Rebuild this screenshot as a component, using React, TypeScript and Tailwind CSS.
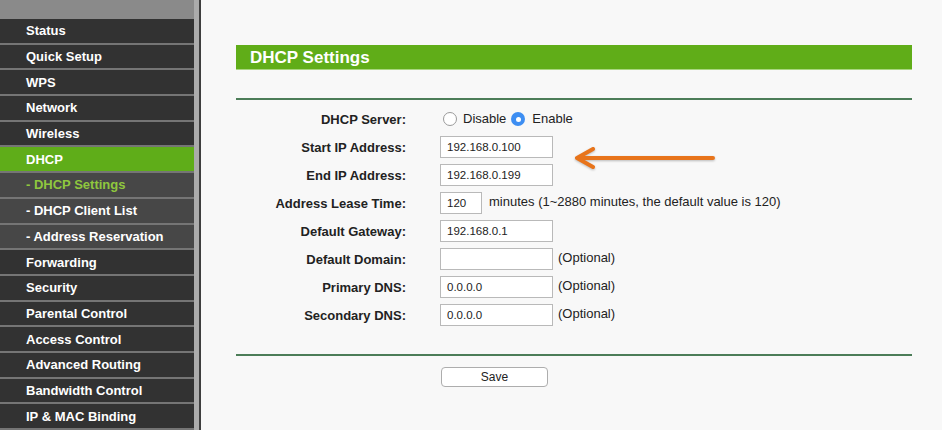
import React from "react";

type NavItem = { label: string; kind: "main" | "active" | "sub" | "subActive" };

const nav: NavItem[] = [
  { label: "Status", kind: "main" },
  { label: "Quick Setup", kind: "main" },
  { label: "WPS", kind: "main" },
  { label: "Network", kind: "main" },
  { label: "Wireless", kind: "main" },
  { label: "DHCP", kind: "active" },
  { label: "- DHCP Settings", kind: "subActive" },
  { label: "- DHCP Client List", kind: "sub" },
  { label: "- Address Reservation", kind: "sub" },
  { label: "Forwarding", kind: "main" },
  { label: "Security", kind: "main" },
  { label: "Parental Control", kind: "main" },
  { label: "Access Control", kind: "main" },
  { label: "Advanced Routing", kind: "main" },
  { label: "Bandwidth Control", kind: "main" },
  { label: "IP & MAC Binding", kind: "main" },
];

function NavRow({ item }: { item: NavItem }) {
  const bg =
    item.kind === "active"
      ? "bg-[#5fad19]"
      : item.kind === "main"
      ? "bg-[#323232]"
      : "bg-[#474747]";
  const color = item.kind === "subActive" ? "text-[#8fc73e]" : "text-white";
  return (
    <div
      className={`h-[25.7px] shrink-0 border-b-2 border-[#757575] ${bg} ${color} flex items-center pl-[26px] text-[13px] font-bold leading-none`}
    >
      {item.label}
    </div>
  );
}

function TextInput({ value, w = "w-[113px]" }: { value: string; w?: string }) {
  return (
    <div
      className={`${w} h-[22px] border border-[#b9b9b9] bg-white flex items-center pl-[6px] pt-[1px] text-[11.5px] text-[#222] leading-none`}
    >
      {value}
    </div>
  );
}

function Row({ label, children }: { label: string; children: React.ReactNode }) {
  return (
    <div className="h-[28px] flex items-center">
      <div className="w-[170px] text-right text-[13px] font-bold text-[#222] leading-none">
        {label}
      </div>
      <div className="ml-[34px] flex items-center">{children}</div>
    </div>
  );
}

function Optional() {
  return <span className="ml-[5px] text-[13px] text-[#222] leading-none -mt-[3px]">(Optional)</span>;
}

export default function App() {
  return (
    <div
      className="relative w-[942px] h-[430px] overflow-hidden flex bg-[#f8f8f8]"
      style={{ fontFamily: '"Liberation Sans", Arial, Helvetica, sans-serif' }}
    >
      {/* Sidebar */}
      <div className="w-[194px] shrink-0 flex flex-col">
        <div className="h-[19px] shrink-0 bg-[#8a8a8a]" />
        {nav.map((n) => (
          <NavRow key={n.label} item={n} />
        ))}
      </div>
      <div className="w-[5px] shrink-0 bg-[#ababab]" />
      <div className="w-[2px] shrink-0 bg-[#3e3e3e]" />

      {/* Content */}
      <div className="flex-1 pl-[35px] pr-[30px] pt-[45px]">
        <div className="h-[25px] bg-[#60ad18] border-b border-[#a9d67f] flex items-center pl-[14px] text-white font-bold text-[17px] leading-none">
          DHCP Settings
        </div>
        <div className="mt-[28px] border-t-2 border-[#4c7d58]" />
        <div className="pt-[5px]">
          <Row label="DHCP Server:">
            <div className="flex items-center text-[13px] text-[#222] leading-none">
              <span className="ml-[3px] w-[14px] h-[14px] rounded-full border border-[#9a9a9a] bg-white" />
              <span className="ml-[6px] -mt-[2px]">Disable</span>
              <span className="ml-[5px] w-[14px] h-[14px] rounded-full bg-[#3d8ef2] flex items-center justify-center">
                <span className="w-[5px] h-[5px] rounded-full bg-white" />
              </span>
              <span className="ml-[7px] -mt-[2px]">Enable</span>
            </div>
          </Row>
          <Row label="Start IP Address:">
            <TextInput value="192.168.0.100" />
          </Row>
          <Row label="End IP Address:">
            <TextInput value="192.168.0.199" />
          </Row>
          <Row label="Address Lease Time:">
            <TextInput value="120" w="w-[42px]" />
            <span className="ml-[7px] text-[13px] text-[#222] leading-none -mt-[3px]">
              minutes (1~2880 minutes, the default value is 120)
            </span>
          </Row>
          <Row label="Default Gateway:">
            <TextInput value="192.168.0.1" />
          </Row>
          <Row label="Default Domain:">
            <TextInput value="" />
            <Optional />
          </Row>
          <Row label="Primary DNS:">
            <TextInput value="0.0.0.0" />
            <Optional />
          </Row>
          <Row label="Secondary DNS:">
            <TextInput value="0.0.0.0" />
            <Optional />
          </Row>
        </div>
        <div className="mt-[25px] border-t-2 border-[#4c7d58]" />
        <div className="pl-[205px] pt-[11px]">
          <button className="w-[107px] h-[20px] rounded-[4px] border border-[#adadad] bg-white text-[12px] text-[#222] leading-none flex items-center justify-center">
            Save
          </button>
        </div>
      </div>

      {/* Annotation arrow */}
      <svg
        className="absolute left-[568px] top-[144px]"
        width="152"
        height="30"
        viewBox="0 0 152 30"
        style={{ filter: "drop-shadow(0px 1px 1px rgba(0,0,0,0.25))" }}
      >
        <path
          d="M145 14 L9 14 M25 5 L9 14 L25 23"
          fill="none"
          stroke="#e8741b"
          strokeWidth="4"
          strokeLinecap="round"
          strokeLinejoin="round"
        />
      </svg>
    </div>
  );
}
